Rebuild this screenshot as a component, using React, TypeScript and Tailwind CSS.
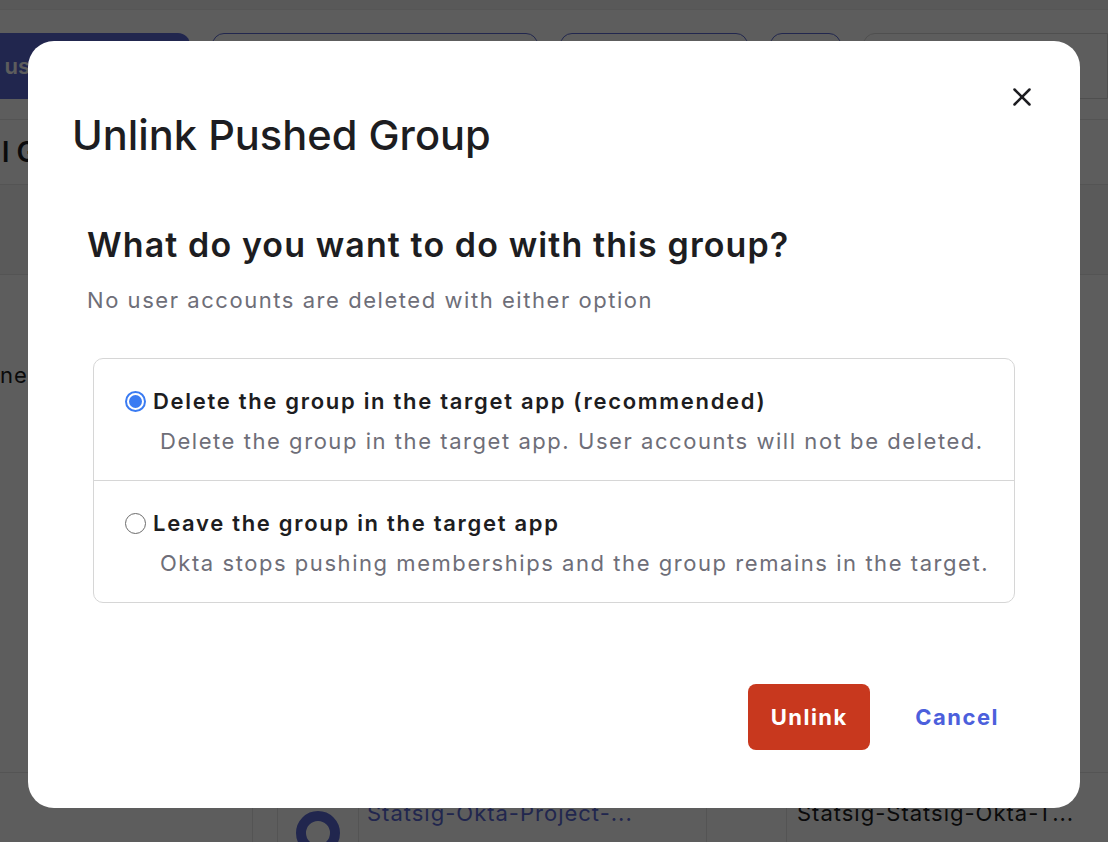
import { X } from 'lucide-react'

const FONT = { fontFamily: 'Inter, "Noto Sans", sans-serif' }

function Background() {
  return (
    <div className="flex h-[842px] w-[1108px] flex-col overflow-hidden bg-white text-[#1d1d21]">
      <div className="h-[10px] border-b border-[#ececec] bg-[#f4f4f4]" />
      <div className="flex items-center gap-[22px] pt-[23px]">
        <div className="flex h-[66px] w-[190px] items-center justify-end rounded-r-[12px] bg-[#5b6ad6] pr-[160px] text-[22px] font-semibold text-white">
          us
        </div>
        <div className="h-[66px] w-[326px] rounded-[12px] border border-[#5b6ad6]" />
        <div className="h-[66px] w-[188px] rounded-[12px] border border-[#5b6ad6]" />
        <div className="h-[66px] w-[71px] rounded-[12px] border border-[#5b6ad6]" />
        <div className="h-[66px] flex-1 rounded-l-[12px] border border-[#d8d8d8]" />
      </div>
      <div className="mt-[20px] border-t border-[#e5e5e5]" />
      <div className="flex h-[65px] items-center border-b border-[#e5e5e5] pl-[2px] text-[28px] font-semibold">
        l G
      </div>
      <div className="h-[90px] border-b border-[#e5e5e5] bg-[#f7f7f7]" />
      <div className="flex h-[200px] items-center text-[22px] tracking-[1px]">ne</div>
      <div className="flex-1" />
      <div className="flex h-[70px] items-start border-t border-[#e5e5e5] pl-[252px]">
        <div className="flex h-full w-[454px] border-l border-[#e5e5e5] pl-[24px]">
          <div className="flex h-full items-start border-l border-[#e5e5e5] pl-[18px]">
            <div className="mt-[38px] h-[44px] w-[44px] rounded-full border-[10px] border-[#5b6ad6]" />
          </div>
          <div className="ml-[18px] h-full border-l border-[#e5e5e5] pl-[8px] pt-[24px] text-[22px] tracking-[1px] text-[#5b6ad6]">
            Statsig-Okta-Project-...
          </div>
        </div>
        <div className="h-full w-[80px] border-l border-[#e5e5e5]" />
        <div className="h-full border-l border-[#e5e5e5] pl-[10px] pt-[24px] text-[22px] tracking-[1px]">
          Statsig-Statsig-Okta-T...
        </div>
      </div>
    </div>
  )
}

function Option({
  checked,
  title,
  desc,
}: {
  checked: boolean
  title: string
  desc: string
}) {
  return (
    <label className="flex h-[121px] flex-col whitespace-nowrap px-[31px] pt-[27px]">
      <div className="flex items-center gap-[7px]">
        {checked ? (
          <span className="flex h-[21px] w-[21px] items-center justify-center rounded-full border-2 border-[#3a7bf2] bg-white">
            <span className="h-[13px] w-[13px] rounded-full bg-[#3a7bf2]" />
          </span>
        ) : (
          <span className="h-[21px] w-[21px] rounded-full border border-[#6b6b6b] bg-white" />
        )}
        <span className="text-[22px] font-semibold leading-[30px] tracking-[1.7px] text-[#1d1d21]">{title}</span>
      </div>
      <p className="mt-[10px] pl-[35px] text-[22px] leading-[30px] tracking-[1.55px] text-[#6e6e78]">{desc}</p>
    </label>
  )
}

export default function App() {
  return (
    <div className="relative h-[842px] w-[1108px] overflow-hidden" style={FONT}>
      <Background />
      <div className="absolute inset-0 flex justify-center bg-black/[0.635] pt-[41px]">
        <div className="relative flex h-[767px] w-[1052px] flex-col rounded-[26px] bg-white pl-[44px] pr-[65px]">
          <button type="button" className="absolute right-[43px] top-[41px] text-[#1d1d21]">
            <X size={30} strokeWidth={2} />
          </button>
          <h1 className="mt-[68px] text-[41.6px] font-medium leading-[52px] text-[#1d1d21]">Unlink Pushed Group</h1>
          <div className="pl-[15px]">
            <h2 className="mt-[61px] text-[34px] font-semibold leading-[46px] tracking-[1.1px] text-[#1d1d21]">
              What do you want to do with this group?
            </h2>
            <p className="mt-[17px] text-[22px] leading-[30px] tracking-[1.55px] text-[#6e6e78]">
              No user accounts are deleted with either option
            </p>
            <div className="ml-[6px] mt-[43px] flex flex-col rounded-[10px] border border-[#d6d6d6]">
              <Option
                checked
                title="Delete the group in the target app (recommended)"
                desc="Delete the group in the target app. User accounts will not be deleted."
              />
              <div className="border-t border-[#d6d6d6]" />
              <Option
                checked={false}
                title="Leave the group in the target app"
                desc="Okta stops pushing memberships and the group remains in the target."
              />
            </div>
          </div>
          <div className="mt-[81px] flex items-center justify-end gap-[45px] pr-[16px]">
            <button
              type="button"
              className="h-[66px] w-[122px] rounded-[8px] bg-[#c8381e] text-[22px] font-bold tracking-[1.5px] text-white"
            >
              Unlink
            </button>
            <button type="button" className="text-[22px] font-bold tracking-[1.5px] text-[#4c5fdc]">
              Cancel
            </button>
          </div>
        </div>
      </div>
    </div>
  )
}
